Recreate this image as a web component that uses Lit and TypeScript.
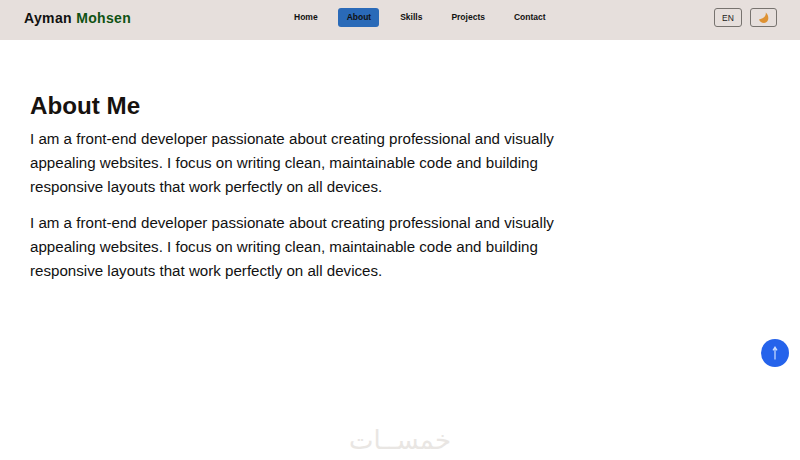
import { LitElement, html, css } from 'lit';
import { customElement } from 'lit/decorators.js';

const intro =
  'I am a front-end developer passionate about creating professional and visually appealing websites. I focus on writing clean, maintainable code and building responsive layouts that work perfectly on all devices.';

@customElement('app-root')
export class AppRoot extends LitElement {
  static styles = css`
    :host {
      display: block;
      position: relative;
      height: 460px;
      overflow: hidden;
      background: #fff;
      font-family: 'Liberation Sans', Arial, sans-serif;
      color: #111;
    }

    header {
      box-sizing: border-box;
      height: 40px;
      padding: 0 23px 5px 24px;
      background: #e6dfdc;
      display: grid;
      grid-template-columns: 262px auto 1fr;
      align-items: center;
    }

    .logo {
      font-size: 14px;
      font-weight: 700;
      letter-spacing: 0.35px;
    }

    .logo span {
      color: #0f5213;
    }

    nav {
      display: flex;
      align-items: center;
      gap: 13px;
    }

    nav a {
      padding: 0 8px;
      height: 19px;
      line-height: 19px;
      border-radius: 3px;
      font-size: 8.5px;
      font-weight: 700;
      color: #111;
    }

    nav a.active {
      padding: 0 8px 0 9px;
      margin-left: -1px;
      background: #2a6ab8;
    }

    .actions {
      display: flex;
      justify-content: flex-end;
      gap: 8px;
    }

    .btn {
      height: 17px;
      border: 1px solid #77736f;
      border-radius: 3px;
      display: flex;
      align-items: center;
      justify-content: center;
      font-size: 8.5px;
      color: #222;
    }

    .lang {
      width: 26px;
    }

    .theme {
      width: 25px;
    }

    main {
      padding: 51px 30px 0;
      width: 540px;
    }

    h1 {
      margin: 0 0 7px;
      font-size: 24.2px;
      line-height: 29px;
      font-weight: 700;
      color: #17120f;
    }

    p {
      margin: 0 0 12px;
      font-size: 15.14px;
      line-height: 24px;
      color: #111;
    }

    .to-top {
      position: absolute;
      left: 761px;
      top: 339px;
      width: 28px;
      height: 28px;
      border-radius: 50%;
      background: #2563eb;
      display: flex;
      align-items: center;
      justify-content: center;
    }

    .watermark {
      position: absolute;
      left: 0;
      right: 0;
      top: 421px;
      text-align: center;
      font-family: 'DejaVu Sans', sans-serif;
      font-size: 26px;
      line-height: 38px;
      color: #e9e6e3;
    }
  `;

  render() {
    return html`
      <header>
        <div class="logo">Ayman <span>Mohsen</span></div>
        <nav>
          <a>Home</a>
          <a class="active">About</a>
          <a>Skills</a>
          <a>Projects</a>
          <a>Contact</a>
        </nav>
        <div class="actions">
          <div class="btn lang">EN</div>
          <div class="btn theme">
            <svg width="12" height="12" viewBox="0 0 12 12">
              <path
                d="M7.8 .4C8.2 3.6 6.4 6.4 1 7.4 2.2 10.8 6 11.8 8.6 10 11.2 8 10.8 3 7.8 .4Z"
                fill="#de9233"
              />
            </svg>
          </div>
        </div>
      </header>
      <main>
        <h1>About Me</h1>
        <p>${intro}</p>
        <p>${intro}</p>
      </main>
      <div class="to-top">
        <svg width="10" height="14" viewBox="0 0 10 14">
          <path d="M5 13.5V1.6M3 4.4 5 1.2 7 4.4" fill="none" stroke="#cfe0ff" stroke-width="1.2" />
        </svg>
      </div>
      <div class="watermark" lang="ar" dir="rtl">خمســات</div>
    `;
  }
}
